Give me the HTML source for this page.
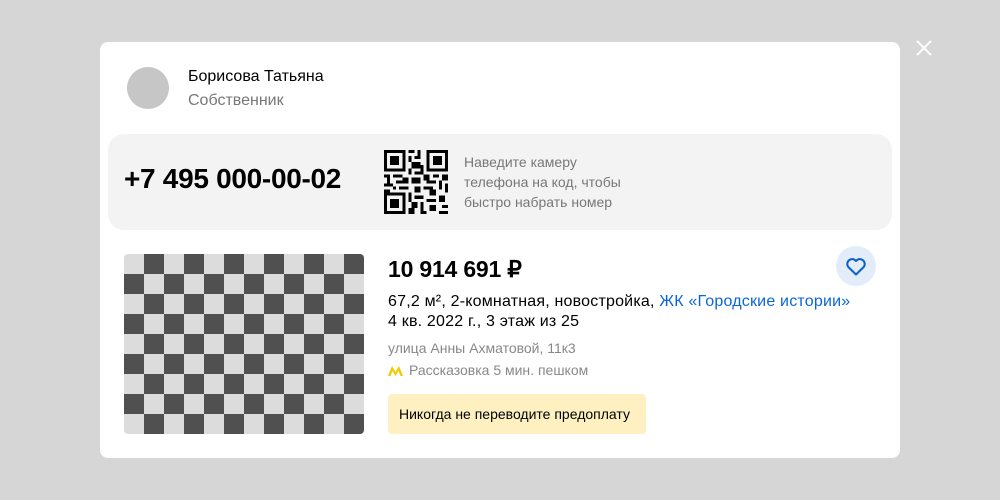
<!DOCTYPE html>
<html><head><meta charset="utf-8"><style>
*{margin:0;padding:0;box-sizing:border-box}
body{width:1000px;height:500px;background:#d6d6d6;font-family:"Liberation Sans",sans-serif;position:relative;overflow:hidden}
.modal{position:absolute;left:100px;top:42px;width:800px;height:416px;background:#fff;border-radius:8px}
.close{position:absolute;left:914px;top:38px}
.av{position:absolute;left:27px;top:25px;width:42px;height:42px;border-radius:50%;background:#c6c6c6}
.name{position:absolute;left:88px;top:26px;font-size:16px;color:#000}
.role{position:absolute;left:88px;top:50px;font-size:16px;color:#777}
.card{position:absolute;left:8px;top:92px;width:784px;height:96px;background:#f3f3f3;border-radius:16px}
.phone{position:absolute;left:16px;top:29px;font-size:28px;font-weight:bold;color:#000;letter-spacing:-0.3px}
.qr{position:absolute;left:276px;top:16px}
.hint{position:absolute;left:356px;top:18px;font-size:14px;line-height:20px;color:#777}
.img{position:absolute;left:24px;top:212px;width:240px;height:180px;border-radius:4px;overflow:hidden;
background-color:#505050;background-image:linear-gradient(45deg,#dcdcdc 25%,transparent 25%,transparent 75%,#dcdcdc 75%),linear-gradient(45deg,#dcdcdc 25%,transparent 25%,transparent 75%,#dcdcdc 75%);background-size:40px 40px;background-position:20px 0,0 20px}
.price{position:absolute;left:288px;top:214px;font-size:23px;font-weight:bold;color:#000;letter-spacing:-0.2px}
.desc{position:absolute;left:288px;top:250px;font-size:16px;line-height:20px;color:#000;letter-spacing:0.2px}
.desc a{color:#0a66d8;text-decoration:none}
.addr{position:absolute;left:288px;top:298px;font-size:14px;color:#888}
.metro{position:absolute;left:288px;top:320px;font-size:14px;color:#888}
.warn{position:absolute;left:288px;top:352px;width:258px;height:40px;background:#fff0c2;border-radius:4px;font-size:14px;line-height:40px;padding-left:11px;color:#000}
.fav{position:absolute;left:736px;top:204px;width:40px;height:40px;border-radius:50%;background:#e2edf9}
</style></head><body>
<svg class="close" width="20" height="20" viewBox="0 0 20 20"><path d="M3 3L17 17M17 3L3 17" stroke="#fff" stroke-width="2"/></svg>
<div class="modal">
<div class="av"></div>
<div class="name">Борисова Татьяна</div>
<div class="role">Собственник</div>
<div class="card">
<div class="phone">+7 495 000-00-02</div>
<svg class="qr" width="64" height="64" viewBox="0 0 21 21" shape-rendering="crispEdges" fill="#000">
<path d="M0 0h7v7h-7zM1 1v5h5v-5zM2 2h3v3h-3z" fill-rule="evenodd"/>
<path d="M14 0h7v7h-7zM15 1v5h5v-5zM16 2h3v3h-3z" fill-rule="evenodd"/>
<path d="M0 14h7v7h-7zM1 15v5h5v-5zM2 16h3v3h-3z" fill-rule="evenodd"/>
<path d="M8 0h2v1h-2zM11 0h1v2h-1zM8 2h1v2h-1zM10 2h2v1h-2zM9 4h3v2h-3zM8 6h1v2h-1zM10 7h2v1h-2zM12 5h1v3h-1z
M0 8h2v1h-2zM3 8h3v1h-3zM1 9h1v2h-1zM4 10h4v1h-4zM0 11h3v1h-3zM6 9h2v1h-2zM5 12h3v1h-3zM0 13h2v1h-2zM3 12h1v1h-1z
M9 9h3v2h-3zM13 8h2v2h-2zM16 8h2v1h-2zM19 8h2v2h-2zM14 10h3v1h-3zM18 10h1v3h-1zM10 12h2v2h-2zM13 12h3v1h-3zM20 11h1v3h-1zM15 13h2v2h-2z
M8 14h1v3h-1zM10 15h3v1h-3zM9 17h2v2h-2zM12 17h1v4h-1zM14 16h3v1h-3zM18 15h2v2h-2zM15 18h2v2h-2zM19 18h2v1h-2zM8 19h2v2h-2zM18 20h3v1h-3zM13 20h1v1h-1z"/>
</svg>
<div class="hint">Наведите камеру<br>телефона на код, чтобы<br>быстро набрать номер</div>
</div>
<div class="img"></div>
<div class="price">10 914 691 ₽</div>
<div class="desc">67,2 м², 2-комнатная, новостройка, <a>ЖК «Городские истории»</a><br>4 кв. 2022 г., 3 этаж из 25</div>
<div class="addr">улица Анны Ахматовой, 11к3</div>
<div class="metro"><svg width="15" height="10" viewBox="0 0 15 10" style="vertical-align:-1px;margin-right:6px"><path d="M0 10L4 0L7.5 6L11 0L15 10H12.5L10.5 5L7.5 10L4.5 5L2.5 10Z" fill="#f5c800"/></svg>Рассказовка 5 мин. пешком</div>
<div class="warn">Никогда не переводите предоплату</div>
<div class="fav"><svg width="40" height="40" viewBox="0 0 40 40"><path d="M20 28.5L12.3 21a4.7 4.7 0 0 1 7.7-6a4.7 4.7 0 0 1 7.7 6Z" fill="none" stroke="#0a5fc9" stroke-width="2" stroke-linejoin="round"/></svg></div>
</div>
</body></html>
